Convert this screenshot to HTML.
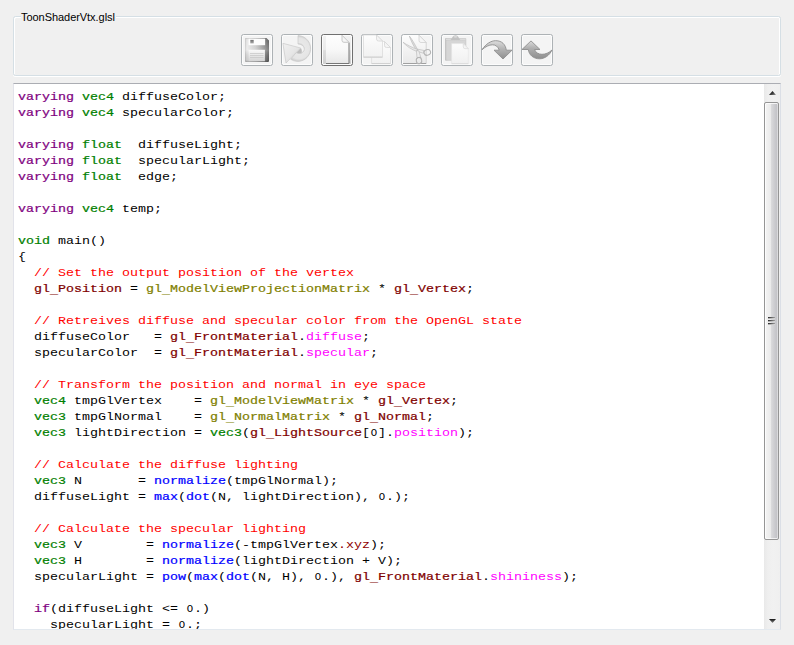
<!DOCTYPE html>
<html><head><meta charset="utf-8">
<style>
*{margin:0;padding:0;box-sizing:border-box}
html,body{width:794px;height:645px;overflow:hidden;background:#f0f0f0}
body{position:relative;font-family:"Liberation Sans",sans-serif}
#gb{position:absolute;left:13px;top:16px;width:768px;height:60px;border:1px solid #d5dfe5;border-radius:2.5px;box-shadow:inset 1px 1px 0 #fff, inset -1px 0 0 #fff, 0 1px 0 #fff}
#gbt{position:absolute;left:21px;top:10px;height:14px;width:95px;letter-spacing:-0.05px;background:#f0f0f0;font-size:11px;line-height:14px;color:#000;white-space:pre}
.btn{position:absolute;top:34px;width:32px;height:32px;border:1px solid #adb2b5;border-radius:2.5px;background:#f4f4f4;box-shadow:inset 0 0 0 1px #fcfcfc}
.btn.en{border-color:#707070;background:linear-gradient(#f2f2f2 0,#ebebeb 48%,#dddddd 52%,#cfcfcf 100%)}
.btn svg{position:absolute;left:-1px;top:-1px;width:32px;height:32px}
#ed{position:absolute;left:13px;top:83px;width:768px;height:547px;background:#fff;border:1px solid #e3e9ef;border-top-color:#abadb3;border-left-color:#e2e3ea;border-right-color:#dbdfe6;overflow:hidden}
#code{position:absolute;left:4px;top:5px;font-family:"Liberation Mono",monospace;font-size:13.333px;line-height:16px;white-space:pre;color:#000}
#code .l{height:16px;transform-origin:0 12px;transform:scaleY(0.87)}
#code b{font-weight:normal;-webkit-text-stroke:0.25px currentColor}
#code i{font-style:normal}
#code em{font-style:normal;display:inline-block;transform:scaleX(.8)}
#code s{text-decoration:none;position:relative;top:1.5px}
.p{color:#800080}.g{color:#008000}.r{color:#ff0000}.m{color:#800000}.o{color:#808000}.f{color:#ff00ff}.b{color:#0000ff}.x{color:#900000}
#sb{position:absolute;left:750px;top:0;width:16px;height:545px;background:linear-gradient(90deg,#e9e9e9 0,#efefef 25%,#f1f1f1 60%,#efefef 100%)}
#th{position:absolute;left:0;top:18px;width:15px;height:438px;border:1px solid #959595;border-radius:2px;background:linear-gradient(90deg,#f4f4f4 0,#eaeaea 46%,#d9d9db 50%,#c4c4c8 88%,#cfcfd2 100%);box-shadow:inset 1px 0 0 rgba(255,255,255,.75),inset -1px 0 0 rgba(255,255,255,.3),inset 0 1px 0 rgba(255,255,255,.8),inset 0 -1px 0 rgba(255,255,255,.7)}
#sb svg{position:absolute;left:0}
.gr{position:absolute;left:3px;width:7px;height:2px;background:linear-gradient(90deg,#2e2e2e 0,#555 40%,#a0a0a0 100%);border-bottom:1px solid rgba(255,255,255,.6);box-sizing:border-box}
</style></head><body>
<div id="gb"></div>
<div id="gbt">ToonShaderVtx.glsl</div>
<div class="btn" style="left:241px"><svg viewBox="0 0 32 32"><defs>
<linearGradient id="fa" x1="0" x2="1" y1="0" y2="0"><stop offset="0" stop-color="#c4c4c4"/><stop offset=".08" stop-color="#e9e9e9"/><stop offset=".45" stop-color="#c8c8c8"/><stop offset=".8" stop-color="#8e8e8e"/><stop offset="1" stop-color="#626262"/></linearGradient>
<linearGradient id="fb" x1="0" x2="0" y1="0" y2="1"><stop offset="0" stop-color="#fafafa"/><stop offset="1" stop-color="#d4d4d4"/></linearGradient>
<linearGradient id="fc" x1="0" x2="0" y1="0" y2="1"><stop offset="0" stop-color="#000" stop-opacity=".18"/><stop offset=".08" stop-color="#fff" stop-opacity="0"/><stop offset=".5" stop-color="#fff" stop-opacity=".2"/><stop offset=".92" stop-color="#000" stop-opacity=".1"/><stop offset="1" stop-color="#000" stop-opacity=".3"/></linearGradient>
<linearGradient id="fd" x1="0" x2="0" y1="0" y2="1"><stop offset="0" stop-color="#6e6e6e"/><stop offset="1" stop-color="#a8a8a8"/></linearGradient>
</defs>
<path d="M5.2 4h20.3l2.5 2.5v20.3a1.2 1.2 0 0 1-1.2 1.2H5.2A1.2 1.2 0 0 1 4 26.800V5.200A1.200 1.200 0 0 1 5.200 4z" fill="url(#fa)"/>
<path d="M5.2 4h20.3l2.5 2.5v20.3a1.2 1.2 0 0 1-1.2 1.2H5.2A1.2 1.2 0 0 1 4 26.800V5.200A1.200 1.200 0 0 1 5.200 4z" fill="url(#fc)"/>
<rect x="7.500" y="4.700" width="16.600" height="6.500" fill="#fdfdfd"/>
<rect x="9.300" y="5.900" width="3.400" height="3.500" fill="url(#fd)"/>
<rect x="7.500" y="15.800" width="16.400" height="11.400" fill="url(#fb)"/>
<path d="M9 19.500h13.500M9 21.500h13.500M9 23.500h13.500" stroke="#c4c4c4" stroke-width=".7" fill="none"/>
</svg></div>
<div class="btn" style="left:281px"><svg viewBox="0 0 32 32"><defs>
<linearGradient id="ra" x1="0" x2="1" y1="0" y2="1"><stop offset="0" stop-color="#f0f0f0"/><stop offset=".5" stop-color="#e6e6e6"/><stop offset="1" stop-color="#d2d2d2"/></linearGradient>
<radialGradient id="rc" cx="18" cy="14.500" r="13" gradientUnits="userSpaceOnUse"><stop offset=".34" stop-color="#d2d2d2"/><stop offset=".46" stop-color="#e8e8e8"/><stop offset=".8" stop-color="#e5e5e5"/><stop offset="1" stop-color="#cccccc"/></radialGradient>
</defs>
<path d="M17 1.600A12.900 12.900 0 1 1 9.700 25.300L15.500 18.200C17 19.600 19 19.700 20.500 19C22.500 18 23.700 16 23.200 14C22.600 11.500 20 10.200 17 10Z" fill="url(#rc)" stroke="#c8c8c8" stroke-width=".7"/>
<path d="M19.700 14C20.600 15 21.200 16.500 20.600 18.900C19 19.700 17 19.500 15.500 18.200Z" fill="#bdbdbd"/>
<path d="M1.900 9.300L19.700 14L9.500 24.300L5 29Z" fill="url(#ra)" stroke="#cacaca" stroke-width=".7" stroke-linejoin="round"/>
</svg></div>
<div class="btn en" style="left:321px"><svg viewBox="0 0 32 32"><defs>
<linearGradient id="na" x1="0" x2="0" y1="0" y2="1"><stop offset="0" stop-color="#fefefe"/><stop offset=".5" stop-color="#f8f8f8"/><stop offset="1" stop-color="#e6e6e6"/></linearGradient>
</defs>
<path d="M5 1.300H21L28 8.300V29.700H5Z" fill="url(#na)"/>
<path d="M21 1.300L28 8.300" fill="none" stroke="#dcdcdc" stroke-width=".8"/>
<path d="M28 8.600V29.500H5" fill="none" stroke="#767676" stroke-width="1"/>
<path d="M21 1.300V6.300A2 2 0 0 0 23 8.300H28Z" fill="#f6f6f6" stroke="#c8c8c8" stroke-width="1"/>
</svg></div>
<div class="btn" style="left:361px"><svg viewBox="0 0 32 32"><defs>
<linearGradient id="ca" x1="0" x2="0" y1="0" y2="1"><stop offset="0" stop-color="#fdfdfd"/><stop offset="1" stop-color="#f1f1f1"/></linearGradient>
</defs>
<path d="M10.600 7.500H23.500L29.500 13.500V29.500H10.600Z" fill="url(#ca)" stroke="#dcdcdc" stroke-width=".8"/>
<path d="M10.600 29.600H29.500" stroke="#d0d0d0" stroke-width="1"/>
<path d="M23.500 7.500V11.500A2 2 0 0 0 25.500 13.500H29.500Z" fill="#f4f4f4" stroke="#d6d6d6" stroke-width=".8"/>
<path d="M2.500 1H15.500L21.500 7V23H2.500Z" fill="url(#ca)" stroke="#dcdcdc" stroke-width=".8"/>
<path d="M2.500 23.200H21.500" stroke="#d2d2d2" stroke-width="1.200"/>
<path d="M15.500 1V5A2 2 0 0 0 17.500 7H21.500Z" fill="#f4f4f4" stroke="#d6d6d6" stroke-width=".8"/>
</svg></div>
<div class="btn" style="left:401px"><svg viewBox="0 0 32 32"><defs>
<linearGradient id="xa" x1="0" x2="0" y1="0" y2="1"><stop offset="0" stop-color="#fdfdfd"/><stop offset="1" stop-color="#e9e9e9"/></linearGradient>
</defs>
<path d="M2 1.300H18L25.200 8.500V29.500H2Z" fill="url(#xa)"/>
<path d="M18 1.300L25.200 8.500V29.500" fill="none" stroke="#d0d0d0" stroke-width=".9"/>
<path d="M2 29.500H25.200" stroke="#a0a0a0" stroke-width="1"/>
<path d="M18 1.300V6.500A2 2 0 0 0 20 8.500H25.200Z" fill="#f6f6f6" stroke="#d0d0d0" stroke-width=".8"/>
<path d="M8.300 2C10.500 4.500 13.500 9.500 16.800 16L15 15.600C12 11 9.800 6.500 8.300 2Z" fill="#dcdcdc" stroke="#b8b8b8" stroke-width=".6"/>
<path d="M2 8.300C6 10.800 11 13.600 16.600 15.400L16.200 17.600C10.500 15.600 5.500 12.200 2 8.300Z" fill="#e8e8e8" stroke="#b8b8b8" stroke-width=".6"/>
<path d="M16.500 15.200L22.800 16.400L22.600 19.300L16.300 17.400Z" fill="#ececec" stroke="#b6b6b6" stroke-width=".6"/>
<path d="M15.300 16.500L17.800 16.800L19.800 23.500L16 23.500Z" fill="#ececec" stroke="#b6b6b6" stroke-width=".6"/>
<ellipse cx="26.300" cy="18.400" rx="3.300" ry="2.800" fill="none" stroke="#b4b4b4" stroke-width="1.050" transform="rotate(-20 26.300 18.400)"/>
<ellipse cx="18" cy="26.600" rx="2.700" ry="3.200" fill="none" stroke="#b4b4b4" stroke-width="1.050" transform="rotate(-10 18 26.600)"/>
</svg></div>
<div class="btn" style="left:441px"><svg viewBox="0 0 32 32"><defs>
<linearGradient id="pa" x1="0" x2="0" y1="0" y2="1"><stop offset="0" stop-color="#fcfcfc"/><stop offset="1" stop-color="#f0f0f0"/></linearGradient>
<linearGradient id="pb" x1="0" x2="1" y1="0" y2="0"><stop offset="0" stop-color="#c2c2c2"/><stop offset=".15" stop-color="#cfcfcf"/><stop offset="1" stop-color="#d0d0d0"/></linearGradient>
</defs>
<rect x="4" y="4" width="21.300" height="22.800" rx="1" fill="url(#pb)"/>
<rect x="5.400" y="6.800" width="18.600" height="19" fill="#d6d6d6"/>
<rect x="5" y="4.800" width="19.300" height="1.300" fill="#dcdcdc"/>
<path d="M9.500 6C11 5 11.500 1.300 14.500 1.300C17.500 1.300 18 5 19.500 6Z" fill="#c2c2c2"/>
<ellipse cx="14.500" cy="2.800" rx="2" ry=".9" fill="#dadada"/>
<path d="M10.600 9.600H22.300L27.300 14.600V29.500H10.600Z" fill="url(#pa)" stroke="#e2e2e2" stroke-width=".6"/>
<path d="M10.600 29.700H27.300" stroke="#dcdcdc" stroke-width="1"/>
<path d="M22.300 9.600V13A1.600 1.600 0 0 0 23.900 14.600H27.300Z" fill="#f4f4f4" stroke="#dadada" stroke-width=".7"/>
</svg></div>
<div class="btn" style="left:481px"><svg viewBox="0 0 32 32"><defs>
<linearGradient id="da" x1="0" x2="0" y1="0" y2="1"><stop offset="0" stop-color="#dedede"/><stop offset=".45" stop-color="#b4b4b4"/><stop offset="1" stop-color="#8e8e8e"/></linearGradient>
</defs>
<path d="M1 15.700C5 9.800 10 6.700 14.600 6.700C21 6.700 24.500 10.500 25.300 16.200H31L22 25L13 16.200H18.300C17 12.500 14.500 10.800 11.500 10.800C8 10.800 4.500 12.700 1 15.700Z" fill="url(#da)" stroke="#8f8f8f" stroke-width=".9" stroke-linejoin="round"/>
</svg></div>
<div class="btn" style="left:521px"><svg viewBox="0 0 32 32"><defs>
<linearGradient id="ua" x1="0" x2="0" y1="0" y2="1"><stop offset="0" stop-color="#dcdcdc"/><stop offset=".4" stop-color="#b0b0b0"/><stop offset="1" stop-color="#8e8e8e"/></linearGradient>
</defs>
<path d="M10 6.900L19 15.500H13.500C14.500 18.500 17.500 20.300 21 20.300C24.500 20.300 28 18.800 31 16C28.500 21.500 23.500 24.800 18.500 24.800C12.500 24.800 8 21 7.300 15.500H1Z" fill="url(#ua)" stroke="#8f8f8f" stroke-width=".9" stroke-linejoin="round"/>
</svg></div>
<div id="ed">
<div id="code"><div class="l"><b class="p">varying</b> <b class="g">vec4</b> diffuseColor;</div><div class="l"><b class="p">varying</b> <b class="g">vec4</b> specularColor;</div><div class="l"> </div><div class="l"><b class="p">varying</b> <b class="g">float</b>  diffuseLight;</div><div class="l"><b class="p">varying</b> <b class="g">float</b>  specularLight;</div><div class="l"><b class="p">varying</b> <b class="g">float</b>  edge;</div><div class="l"> </div><div class="l"><b class="p">varying</b> <b class="g">vec4</b> temp;</div><div class="l"> </div><div class="l"><b class="g">void</b> main()</div><div class="l">{</div><div class="l">  <i class="r">// Set the output position of the vertex</i></div><div class="l">  <b class="m">gl<s>_</s>Position</b> = <b class="o">gl<s>_</s>ModelViewProjectionMatrix</b> * <b class="m">gl<s>_</s>Vertex</b>;</div><div class="l"> </div><div class="l">  <i class="r">// Retreives diffuse and specular color from the OpenGL state</i></div><div class="l">  diffuseColor   = <b class="m">gl<s>_</s>FrontMaterial</b>.<i class="f">diffuse</i>;</div><div class="l">  specularColor  = <b class="m">gl<s>_</s>FrontMaterial</b>.<i class="f">specular</i>;</div><div class="l"> </div><div class="l">  <i class="r">// Transform the position and normal in eye space</i></div><div class="l">  <b class="g">vec4</b> tmpGlVertex    = <b class="o">gl<s>_</s>ModelViewMatrix</b> * <b class="m">gl<s>_</s>Vertex</b>;</div><div class="l">  <b class="g">vec3</b> tmpGlNormal    = <b class="o">gl<s>_</s>NormalMatrix</b> * <b class="m">gl<s>_</s>Normal</b>;</div><div class="l">  <b class="g">vec3</b> lightDirection = <b class="g">vec3</b>(<b class="m">gl<s>_</s>LightSource</b>[<em>O</em>].<i class="f">position</i>);</div><div class="l"> </div><div class="l">  <i class="r">// Calculate the diffuse lighting</i></div><div class="l">  <b class="g">vec3</b> N       = <b class="b">normalize</b>(tmpGlNormal);</div><div class="l">  diffuseLight = <b class="b">max</b>(<b class="b">dot</b>(N, lightDirection), <em>O</em>.);</div><div class="l"> </div><div class="l">  <i class="r">// Calculate the specular lighting</i></div><div class="l">  <b class="g">vec3</b> V        = <b class="b">normalize</b>(-tmpGlVertex<i class="x">.xyz</i>);</div><div class="l">  <b class="g">vec3</b> H        = <b class="b">normalize</b>(lightDirection + V);</div><div class="l">  specularLight = <b class="b">pow</b>(<b class="b">max</b>(<b class="b">dot</b>(N, H), <em>O</em>.), <b class="m">gl<s>_</s>FrontMaterial</b>.<i class="f">shininess</i>);</div><div class="l"> </div><div class="l">  <b class="p">if</b>(diffuseLight &lt;= <em>O</em>.)</div><div class="l">    specularLight = <em>O</em>.;</div></div>
<div id="sb"><svg style="top:7px" width="16" height="4" viewBox="0 0 16 4"><defs><linearGradient id="ag" x1="0" x2="1" y1="0" y2="1"><stop offset="0" stop-color="#111"/><stop offset=".5" stop-color="#333"/><stop offset="1" stop-color="#999"/></linearGradient></defs><path d="M8.500 0L12 4H5Z" fill="url(#ag)"/></svg><div id="th"><div class="gr" style="top:214px"></div><div class="gr" style="top:217px"></div><div class="gr" style="top:220px"></div></div><svg style="top:535px" width="16" height="4" viewBox="0 0 16 4"><defs><linearGradient id="ah" x1="0" x2="0" y1="0" y2="1"><stop offset="0" stop-color="#111"/><stop offset="1" stop-color="#888"/></linearGradient></defs><path d="M5 0H12L8.500 4Z" fill="url(#ah)"/></svg></div>
</div>
</body></html>
